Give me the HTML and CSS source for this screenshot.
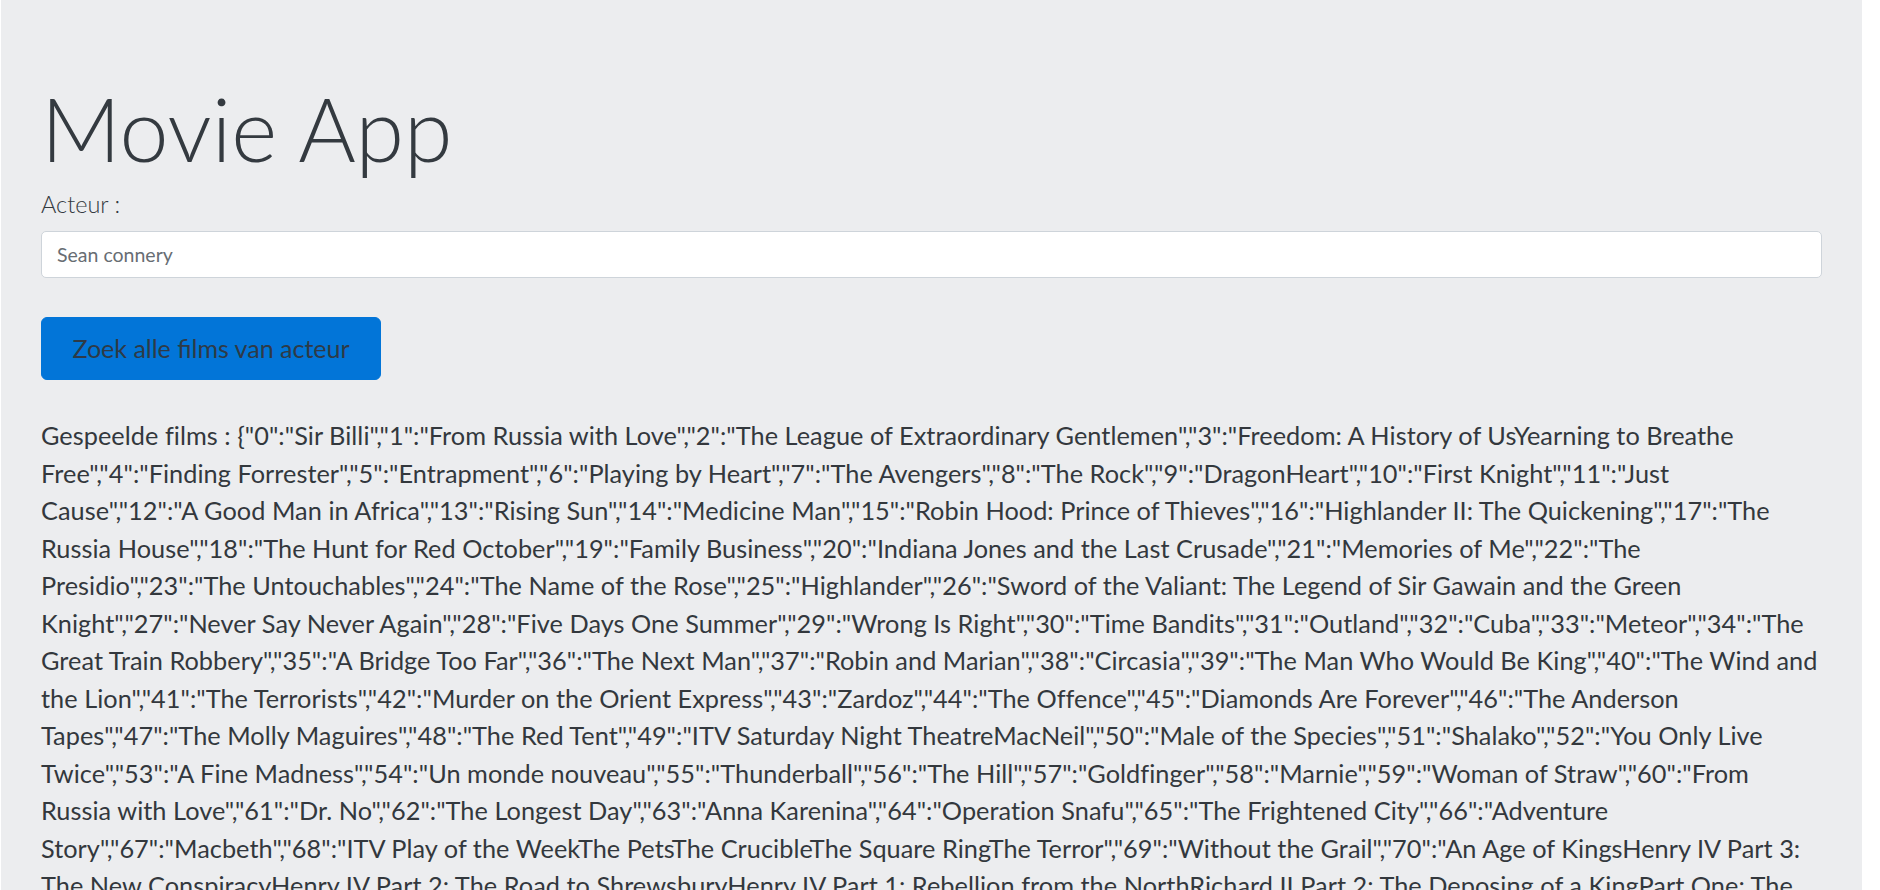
FILE: index.html
```html
<!DOCTYPE html>
<html lang="nl">
<head>
<meta charset="utf-8">
<title>Movie App</title>
<link rel="stylesheet" href="styles.css">
</head>
<body>
<div class="jumbotron">
  <h1 class="title">Movie App</h1>
  <form class="search">
    <label class="label" for="actor">Acteur :</label>
    <input class="field" id="actor" type="text" placeholder="Sean connery">
    <button class="btn" type="button">Zoek alle films van acteur</button>
  </form>
  <p class="result">Gespeelde films : {"0":"Sir Billi","1":"From Russia with Love","2":"The League of Extraordinary Gentlemen","3":"Freedom: A History of UsYearning to Breathe Free","4":"Finding Forrester","5":"Entrapment","6":"Playing by Heart","7":"The Avengers","8":"The Rock","9":"DragonHeart","10":"First Knight","11":"Just Cause","12":"A Good Man in Africa","13":"Rising Sun","14":"Medicine Man","15":"Robin Hood: Prince of Thieves","16":"Highlander II: The Quickening","17":"The Russia House","18":"The Hunt for Red October","19":"Family Business","20":"Indiana Jones and the Last Crusade","21":"Memories of Me","22":"The Presidio","23":"The Untouchables","24":"The Name of the Rose","25":"Highlander","26":"Sword of the Valiant: The Legend of Sir Gawain and the Green Knight","27":"Never Say Never Again","28":"Five Days One Summer","29":"Wrong Is Right","30":"Time Bandits","31":"Outland","32":"Cuba","33":"Meteor","34":"The Great Train Robbery","35":"A Bridge Too Far","36":"The Next Man","37":"Robin and Marian","38":"Circasia","39":"The Man Who Would Be King","40":"The Wind and the Lion","41":"The Terrorists","42":"Murder on the Orient Express","43":"Zardoz","44":"The Offence","45":"Diamonds Are Forever","46":"The Anderson Tapes","47":"The Molly Maguires","48":"The Red Tent","49":"ITV Saturday Night TheatreMacNeil","50":"Male of the Species","51":"Shalako","52":"You Only Live Twice","53":"A Fine Madness","54":"Un monde nouveau","55":"Thunderball","56":"The Hill","57":"Goldfinger","58":"Marnie","59":"Woman of Straw","60":"From Russia with Love","61":"Dr. No","62":"The Longest Day","63":"Anna Karenina","64":"Operation Snafu","65":"The Frightened City","66":"Adventure Story","67":"Macbeth","68":"ITV Play of the WeekThe PetsThe CrucibleThe Square RingThe Terror","69":"Without the Grail","70":"An Age of KingsHenry IV Part 3: The New ConspiracyHenry IV Part 2: The Road to ShrewsburyHenry IV Part 1: Rebellion from the NorthRichard II Part 2: The Deposing of a KingPart One: The Hollow Crown","71":"The Bowler and the Bunnet","72":"Dial M for Murder","73":"Anna Christie","74":"Darby O'Gill and the Little People","75":"Another Time, Another Place","76":"Action of the Tiger","77":"Hell Drivers","78":"Time Lock","79":"No Road Back","80":"Blood Money"}</p>
</div>
</body>
</html>
```
FILE: styles.css
```css
html, body {
  margin: 0;
  padding: 0;
  background: #ffffff;
}

body {
  font-family: "Lato", "Liberation Sans", sans-serif;
  color: #343a40;
}

.jumbotron {
  width: 1861px;
  margin-left: 1px;
  box-sizing: border-box;
  min-height: 890px;
  padding: 76px 40px 40px;
  background: #ecedef;
}

.title {
  margin: 0 0 4px;
  font-family: "Lato", "Liberation Sans", sans-serif;
  font-size: 88px;
  font-weight: 300;
  line-height: 1.2;
  color: #343a40;
}

.search {
  display: flex;
  flex-direction: column;
  align-items: flex-start;
  margin: 0;
}

.label {
  display: block;
  margin-bottom: 9px;
  font-size: 23.5px;
  font-weight: 300;
  line-height: 36px;
  color: #343a40;
}

.field {
  display: block;
  box-sizing: border-box;
  width: 100%;
  height: 47px;
  margin: 0 0 39px;
  padding: 0 15px;
  font-family: "Lato", "Liberation Sans", sans-serif;
  font-size: 19.5px;
  color: #495057;
  background: #ffffff;
  border: 1px solid #ced4da;
  border-radius: 5px;
  outline: none;
}

.field::placeholder {
  color: #676d73;
  opacity: 1;
}

.btn {
  display: flex;
  align-items: center;
  justify-content: center;
  box-sizing: border-box;
  width: 340px;
  height: 63px;
  margin: 0 0 37.5px;
  padding: 0 20px;
  font-family: "Lato", "Liberation Sans", sans-serif;
  font-size: 25px;
  font-weight: 400;
  color: #2e3a46;
  background: #0275d8;
  border: 1px solid #0275d8;
  border-radius: 6px;
  cursor: pointer;
}

.result {
  margin: 0;
  font-size: 25.3px;
  letter-spacing: 0.04px;
  line-height: 37.5px;
  color: #33383d;
}
```
